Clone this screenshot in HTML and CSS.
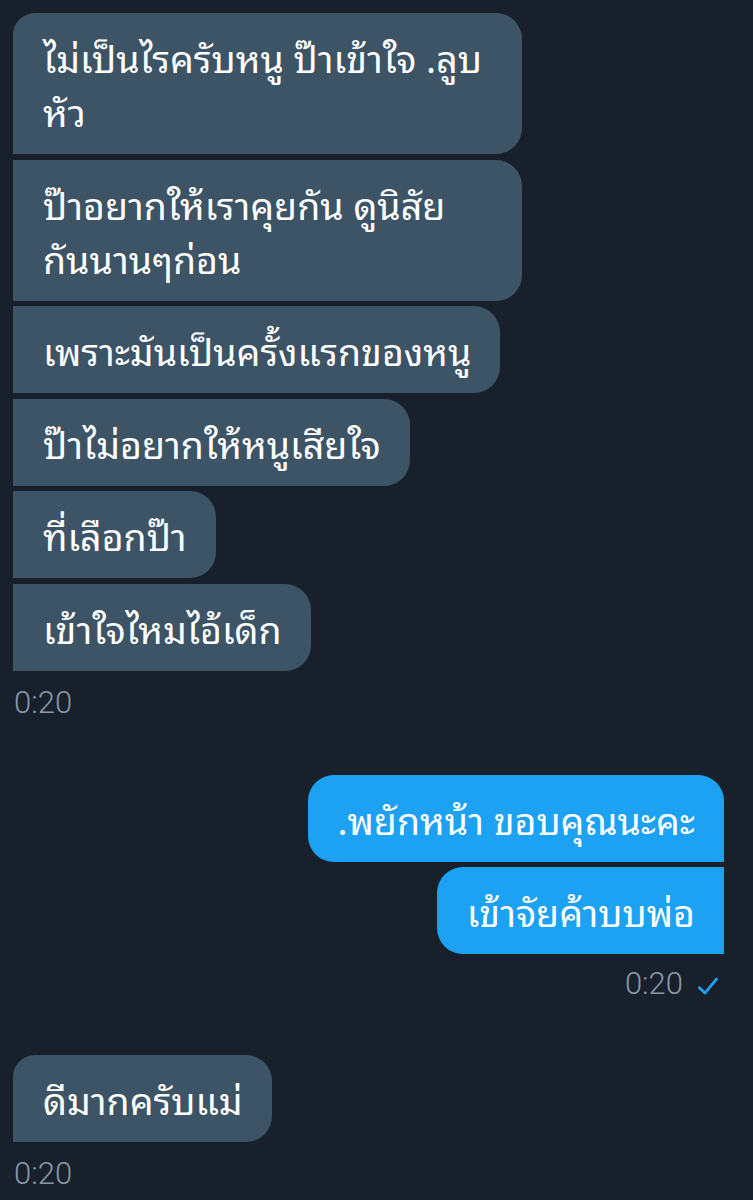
FILE: index.html
```html
<!DOCTYPE html>
<html>
<head>
  <meta charset="utf-8">
  <title>Messages</title>
  <link rel="stylesheet" href="styles.css">
</head>
<body>
  <div class="chat">
    <div class="group incoming">
      <div class="bubble">ไม่เป็นไรครับหนู ป๊าเข้าใจ .ลูบหัว</div>
      <div class="bubble">ป๊าอยากให้เราคุยกัน ดูนิสัย<span class="keep">กันนานๆก่อน</span></div>
      <div class="bubble">เพราะมันเป็นครั้งแรกของหนู</div>
      <div class="bubble">ป๊าไม่อยากให้หนูเสียใจ</div>
      <div class="bubble">ที่เลือกป๊า</div>
      <div class="bubble">เข้าใจไหมไอ้เด็ก</div>
    </div>
    <div class="time">0:20</div>

    <div class="group outgoing">
      <div class="bubble">.พยักหน้า ขอบคุณนะคะ</div>
      <div class="bubble">เข้าจัยค้าบบพ่อ</div>
    </div>
    <div class="time sent">
      0:20
      <svg class="check" width="26" height="26" viewBox="0 0 24 24">
        <path d="M4 13.5 L9.2 18.5 L20 5.5" fill="none" stroke="#1da1f2" stroke-width="2.6" stroke-linecap="round" stroke-linejoin="round"/>
      </svg>
    </div>

    <div class="group incoming later">
      <div class="bubble">ดีมากครับแม่</div>
    </div>
    <div class="time">0:20</div>
  </div>
</body>
</html>
```

FILE: styles.css
```css
body {
  margin: 0;
  background-color: #17202b;
  font-family: "Noto Sans Thai Looped", "Noto Sans", "Noto Sans Thai", sans-serif;
  color: #ffffff;
}

.chat {
  padding: 13px 29px 0 13px;
}

.group {
  display: flex;
  flex-direction: column;
  gap: 5.5px;
}

.incoming {
  align-items: flex-start;
}

.outgoing {
  align-items: flex-end;
  margin-top: 53px;
}

.later {
  margin-top: 52px;
}

.bubble {
  max-width: 509px;
  box-sizing: border-box;
  padding: 16px 29px 17px 30px;
  font-size: 37.5px;
  line-height: 54px;
  border-radius: 0 26px 26px 0;
  background-color: #3d5466;
}

.keep {
  white-space: nowrap;
}

.incoming .bubble:first-child {
  border-top-left-radius: 22px;
}

.outgoing .bubble {
  background-color: #1da1f2;
  border-radius: 26px 0 0 26px;
}

.outgoing .bubble:first-child {
  border-top-right-radius: 26px;
}

.time {
  margin-top: 13px;
  padding-left: 1px;
  font-family: Roboto, sans-serif;
  font-weight: 300;
  font-size: 31px;
  line-height: 38px;
  color: #8899a6;
}

.time.sent {
  display: flex;
  justify-content: flex-end;
  align-items: center;
  gap: 12px;
  margin-top: 11px;
  padding-right: 3px;
}

.check {
  margin-top: 4px;
}
```
